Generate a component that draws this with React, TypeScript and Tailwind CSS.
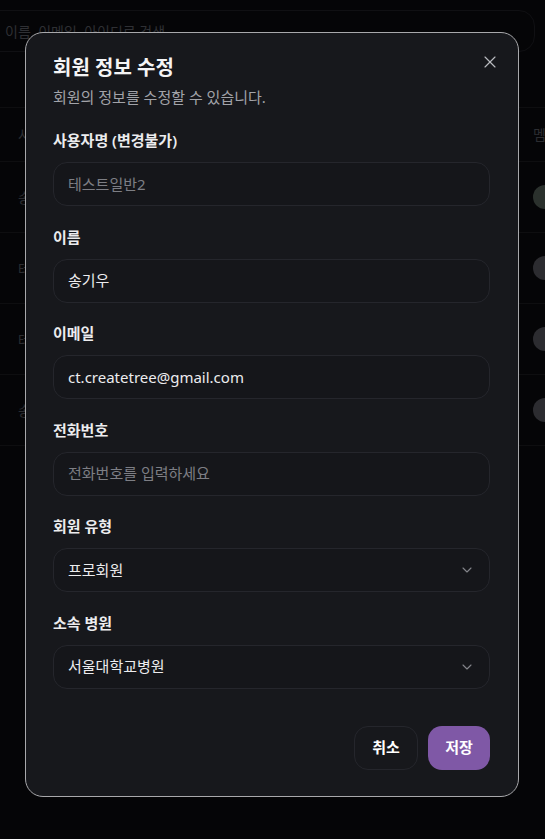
import { X, ChevronDown } from "lucide-react";

const font = { fontFamily: '"Noto Sans", "Noto Sans CJK KR", sans-serif' };

type Row = { name: string; dot: string };

const rows: Row[] = [
  { name: "송기우", dot: "bg-[#2b312d]" },
  { name: "테스트일반2", dot: "bg-[#2c2c30]" },
  { name: "테스트일반1", dot: "bg-[#2c2c30]" },
  { name: "송민지", dot: "bg-[#2c2c30]" },
];

function Background() {
  return (
    <div className="flex flex-col">
      <div className="pt-[10px]">
        <div className="-ml-4 flex h-[42px] w-[551px] items-center rounded-r-2xl border border-[#101013] pl-[20px] text-[14px] text-[#2f3034]">
          이름, 이메일, 아이디로 검색
        </div>
      </div>
      <div className="mt-[55px] border-t border-[#0e0e10]" />
      <div className="flex h-[54px] items-center justify-between border-b border-[#0e0e10] pl-[18px] text-[14px] text-[#2c2d31]">
        <span>사용자명</span>
        <span className="w-[12px] overflow-hidden whitespace-nowrap">멤버십</span>
      </div>
      {rows.map((r) => (
        <div
          key={r.name}
          className="flex h-[71px] items-center justify-between border-b border-[#0e0e10] pl-[18px] text-[14px] text-[#2c2d31]"
        >
          <span>{r.name}</span>
          <span className={`-mr-[12px] h-[24px] w-[24px] rounded-full ${r.dot}`} />
        </div>
      ))}
    </div>
  );
}

function Field({ label, children }: { label: string; children: React.ReactNode }) {
  return (
    <div className="flex flex-col gap-[12px]">
      <label className="text-[15px] leading-[20px] font-semibold text-[#ececee]">{label}</label>
      {children}
    </div>
  );
}

function TextBox({ value, muted }: { value: string; muted?: boolean }) {
  return (
    <div
      className={`flex h-[44px] items-center rounded-[14px] border border-[#25262c] bg-[#15161a] px-[14px] text-[15px] ${
        muted ? "text-[#7d7e84]" : "text-[#ececee]"
      }`}
    >
      {value}
    </div>
  );
}

function SelectBox({ value }: { value: string }) {
  return (
    <div className="flex h-[44px] items-center justify-between rounded-[14px] border border-[#25262c] bg-[#15161a] pr-[14px] pl-[14px] text-[15px] text-[#ececee]">
      <span>{value}</span>
      <ChevronDown size={16} strokeWidth={1.6} className="text-[#84858b]" />
    </div>
  );
}

export default function App() {
  return (
    <div className="relative h-[839px] w-[545px] overflow-hidden bg-[#050507]" style={font}>
      <Background />

      <div className="absolute top-[32px] left-[25px] w-[494px] rounded-[18px] border border-[#a8a8ab] bg-[#17181c] pt-[21px] pr-[28px] pb-[26px] pl-[27px]">
        <button type="button" className="absolute top-[19px] right-[18px] text-[#b9babf]">
          <X size={20} strokeWidth={1.4} />
        </button>

        <h2 className="text-[20px] leading-[28px] font-bold text-[#f4f4f5]">회원 정보 수정</h2>
        <p className="mt-[4px] text-[15px] leading-[22px] text-[#a2a3a9]">회원의 정보를 수정할 수 있습니다.</p>

        <div className="mt-[22px] flex flex-col gap-[20.5px]">
          <Field label="사용자명 (변경불가)">
            <TextBox value="테스트일반2" muted />
          </Field>
          <Field label="이름">
            <TextBox value="송기우" />
          </Field>
          <Field label="이메일">
            <TextBox value="ct.createtree@gmail.com" />
          </Field>
          <Field label="전화번호">
            <TextBox value="전화번호를 입력하세요" muted />
          </Field>
          <Field label="회원 유형">
            <SelectBox value="프로회원" />
          </Field>
          <Field label="소속 병원">
            <SelectBox value="서울대학교병원" />
          </Field>
        </div>

        <div className="mt-[37px] flex justify-end gap-[10px]">
          <button
            type="button"
            className="h-[44px] w-[64px] rounded-[14px] border border-[#25262c] text-[15px] font-semibold text-white"
          >
            취소
          </button>
          <button
            type="button"
            className="h-[44px] w-[62px] rounded-[14px] bg-[#7f58a6] text-[15px] font-semibold text-white"
          >
            저장
          </button>
        </div>
      </div>
    </div>
  );
}
